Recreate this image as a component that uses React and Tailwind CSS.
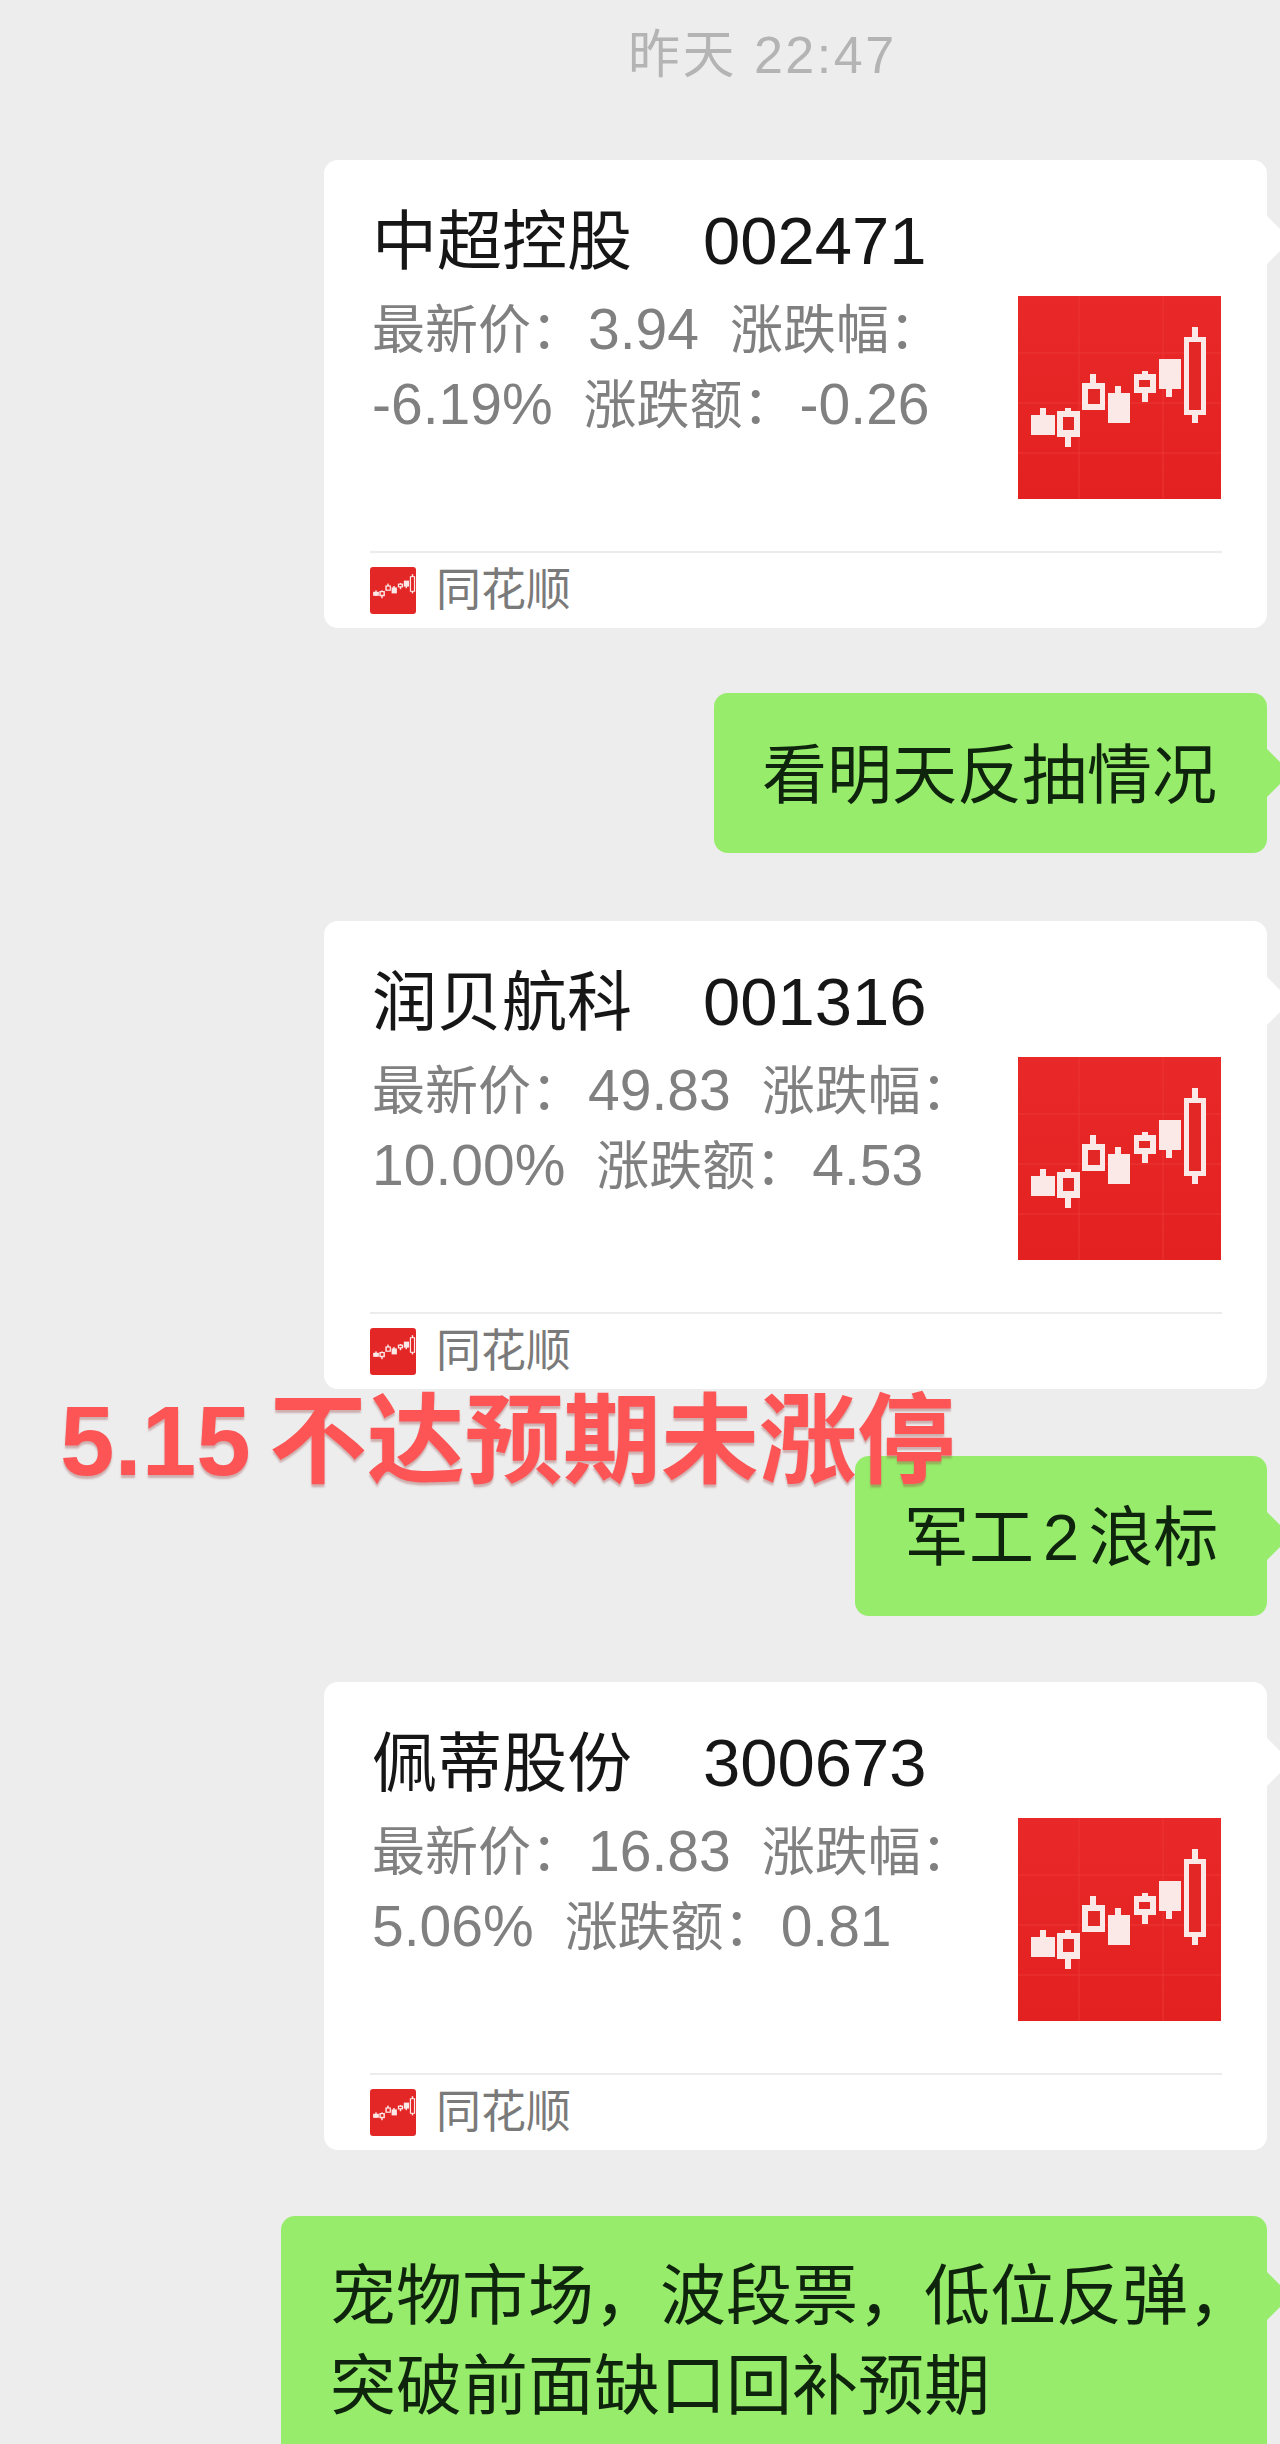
const FONT = "font-['Liberation_Sans','Noto_Sans_CJK_SC',sans-serif]";

const cards = [
    {
        name: "中超控股",
        code: "002471",
        lines: [
            ["最新价\uFF1A", "3.94", "涨跌幅\uFF1A"],
            ["-6.19%", "涨跌额\uFF1A", "-0.26"],
        ],
    },
    {
        name: "润贝航科",
        code: "001316",
        lines: [
            ["最新价\uFF1A", "49.83", "涨跌幅\uFF1A"],
            ["10.00%", "涨跌额\uFF1A", "4.53"],
        ],
    },
    {
        name: "佩蒂股份",
        code: "300673",
        lines: [
            ["最新价\uFF1A", "16.83", "涨跌幅\uFF1A"],
            ["5.06%", "涨跌额\uFF1A", "0.81"],
        ],
    },
];

// body and hole are [x, y, w, h], wick is [x, y1, y2]
const candles = [
    { body: [13, 119, 24, 20], wick: [25, 112, 139] },
    { body: [39, 115, 23, 26], wick: [50, 112, 151], hole: [45, 121, 11, 13] },
    { body: [64, 87, 23, 27], wick: [75, 78, 90], hole: [70, 93, 12, 15] },
    { body: [90, 97, 22, 30], wick: [100, 90, 100] },
    { body: [116, 78, 22, 19], wick: [127, 75, 106], hole: [121, 84, 11, 7] },
    { body: [141, 63, 22, 30], wick: [151, 90, 101] },
    { body: [166, 41, 22, 78], wick: [177, 31, 127], hole: [171, 46, 12, 68] },
];

function Candles() {
    return (
        <g>
            {candles.map((c, i) => (
                <g key={i}>
                    <rect x={c.wick[0] - 3} y={c.wick[1]} width="6" height={c.wick[2] - c.wick[1]} fill="#fbe9e8" />
                    <rect x={c.body[0]} y={c.body[1]} width={c.body[2]} height={c.body[3]} fill="#fbe9e8" />
                    {c.hole && <rect x={c.hole[0]} y={c.hole[1]} width={c.hole[2]} height={c.hole[3]} fill="#e32626" />}
                </g>
            ))}
        </g>
    );
}

function Thumb() {
    return (
        <svg viewBox="0 0 203 203" className="w-[203px] h-[203px] shrink-0 blur-[0.4px]">
            <defs>
                <linearGradient id="thumbBg" x1="0" y1="0" x2="0" y2="1">
                    <stop offset="0" stopColor="#e92829" />
                    <stop offset="1" stopColor="#e32120" />
                </linearGradient>
            </defs>
            <rect width="203" height="203" fill="url(#thumbBg)" />
            <g stroke="#ec3634" strokeWidth="1">
                <line x1="0" y1="57" x2="203" y2="57" />
                <line x1="0" y1="107" x2="203" y2="107" />
                <line x1="0" y1="157" x2="203" y2="157" />
                <line x1="61" y1="0" x2="61" y2="203" />
                <line x1="145" y1="0" x2="145" y2="203" />
            </g>
            <Candles />
        </svg>
    );
}

function Logo() {
    return (
        <svg viewBox="0 0 46 47" className="w-[46px] h-[47px] shrink-0 rounded-[3px]">
            <rect width="46" height="47" fill="#e32626" />
            <g transform="translate(0 1) scale(0.24 0.2)">
                <Candles />
            </g>
        </svg>
    );
}

function Tail({ color }) {
    return <div className={`absolute top-[63px] -right-[17px] w-[34px] h-[34px] rotate-45 ${color}`} />;
}

function StatLine({ parts }) {
    return (
        <div className="h-[75px] leading-[75px] whitespace-nowrap text-[53px] text-[#808080]">
            {parts.map((p, i) =>
                p.endsWith("\uFF1A") ? (
                    <span key={i} className="mr-[4px]">{p}</span>
                ) : (
                    <span key={i} className="text-[57px] mr-[31px]">{p}</span>
                ),
            )}
        </div>
    );
}

function StockCard({ card }) {
    return (
        <div className="relative w-[943px] h-[468px] rounded-[14px] bg-white">
            <Tail color="bg-white" />
            <div className="relative flex h-[391px] pl-[48px] pr-[46px] pt-[47px]">
                <div className="flex-1">
                    <div className="h-[68px] leading-[68px] whitespace-nowrap text-[65px] text-[#161616]">
                        {card.name}
                        <span className="ml-[71px] text-[67px]">{card.code}</span>
                    </div>
                    <div className="mt-[17px]">
                        {card.lines.map((parts, i) => (
                            <StatLine key={i} parts={parts} />
                        ))}
                    </div>
                </div>
                <div className="pt-[89px]">
                    <Thumb />
                </div>
            </div>
            <div className="relative ml-[46px] mr-[45px] border-t-2 border-[#ececec] pt-[14px] flex items-center gap-[20px]">
                <Logo />
                <span className="text-[45px] leading-[47px] text-[#7a7a7a]">同花顺</span>
            </div>
        </div>
    );
}

function GreenBubble({ className, children }) {
    return (
        <div className={`relative rounded-[14px] bg-[#97ec6b] text-[#0f240c] ${className}`}>
            <Tail color="bg-[#97ec6b]" />
            <div className="relative">{children}</div>
        </div>
    );
}

export default function App() {
    return (
        <div className={`relative w-[1280px] h-[2444px] overflow-hidden bg-[#ededed] ${FONT}`}>
            <div className="flex flex-col items-end pr-[13px]">
                <div className="w-full h-[160px] pt-[26px] pl-[628px] text-[52px] leading-[58px] text-[#b4b4b4] whitespace-nowrap tracking-[2.5px]">
                    昨天 22:47
                </div>
                <StockCard card={cards[0]} />
                <GreenBubble className="w-[553px] h-[160px] mt-[65px] pl-[48px] pt-[50px] text-[65px] leading-[66px] whitespace-nowrap">
                    看明天反抽情况
                </GreenBubble>
                <div className="mt-[68px]">
                    <StockCard card={cards[1]} />
                </div>
                <GreenBubble className="w-[412px] h-[160px] mt-[67px] pl-[49px] pt-[49px] text-[65px] leading-[66px] whitespace-nowrap [word-spacing:-9px]">
                    军工 2 浪标
                </GreenBubble>
                <div className="mt-[66px]">
                    <StockCard card={cards[2]} />
                </div>
                <GreenBubble className="w-[986px] h-[300px] mt-[66px] pl-[49px] pt-[35px] text-[66px] leading-[90px] whitespace-nowrap">
                    {"宠物市场\uFF0C波段票\uFF0C低位反弹\uFF0C"}
                    <br />
                    突破前面缺口回补预期
                </GreenBubble>
            </div>
            <div className="absolute left-[60px] top-[1392px] text-[98px] leading-[98px] font-bold text-[#fd5556] whitespace-nowrap [word-spacing:-9px] [text-shadow:0_3px_2px_rgba(150,60,60,0.35)]">
                5.15 不达预期未涨停
            </div>
        </div>
    );
}
